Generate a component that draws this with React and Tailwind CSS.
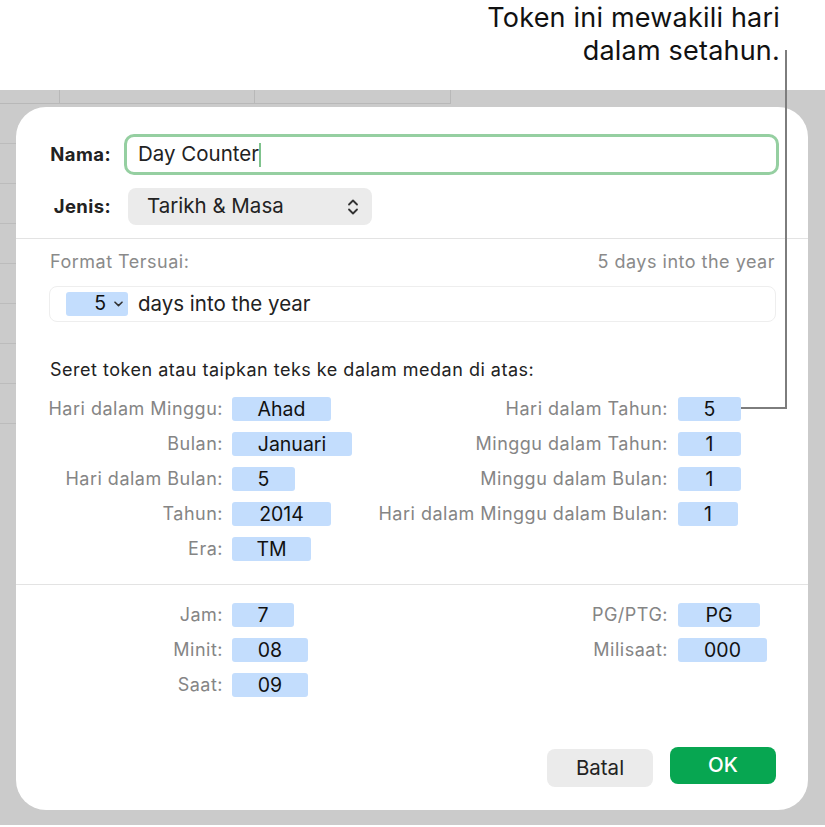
import React from "react";

const font = { fontFamily: "Inter, 'Noto Sans', sans-serif" };

function Token({ w, children }) {
  return (
    <div className={`h-6 rounded-[3px] bg-[#c3ddfd] text-[#111] text-[19.5px] leading-6 text-center ${w}`}>
      {children}
    </div>
  );
}

function Row({ lLabel, lTok, lW, rLabel, rTok, rW }) {
  return (
    <div className="flex h-[35px] items-center pl-[18px]">
      <div className="w-[198px] text-right text-[18px] tracking-[0.5px] text-[#858585] pr-[9px] whitespace-nowrap">{lLabel}</div>
      <div className="w-[140px]">{lTok && <Token w={lW}>{lTok}</Token>}</div>
      <div className="w-[306px] text-right text-[18px] tracking-[0.5px] text-[#858585] pr-[10px] whitespace-nowrap">{rLabel}</div>
      <div>{rTok && <Token w={rW}>{rTok}</Token>}</div>
    </div>
  );
}

export default function App() {
  return (
    <div style={font} className="relative w-[825px] h-[827px] bg-white overflow-hidden flex flex-col">
      {/* callout text */}
      <div className="h-[90px] flex justify-end pr-[45px] pt-[1px]">
        <div className="text-right text-[27px] leading-[33px] text-[#111] tracking-[0.2px]">
          Token ini mewakili hari
          <br />
          dalam setahun.
        </div>
      </div>

      {/* spreadsheet background */}
      <div className="h-[735px] bg-[#cbcbcb] flex flex-col">
        <div className="h-[14px] flex">
          <div className="w-[60px] border-r border-b border-[#b8b8b8]" />
          <div className="w-[195px] border-r border-b border-[#b8b8b8]" />
          <div className="w-[196px] border-r border-b border-[#b8b8b8]" />
        </div>
        <div className="flex flex-1">
          <div className="w-4 flex flex-col">
            {Array.from({ length: 8 }).map((_, i) => (
              <div key={i} className="h-10 border-b border-[#bcbcbc]" />
            ))}
          </div>

          {/* dialog */}
          <div className="mt-[3px] w-[792px] h-[703px] bg-white rounded-[30px] flex flex-col">
            {/* Nama */}
            <div className="mt-[27px] flex items-center px-[18px]">
              <div className="w-[77px] text-right text-[18.5px] tracking-[0.4px] font-bold text-[#222]">Nama:</div>
              <div className="ml-[13px] w-[655px] h-[41px] rounded-[10px] border-[3px] border-[#95cfa1] flex items-center pl-[11px] text-[20.5px] text-[#222]">
                Day Counter
                <span className="inline-block w-[2px] h-[24px] bg-[#7fc38d]" />
              </div>
            </div>
            {/* Jenis */}
            <div className="mt-[13px] flex items-center px-[18px]">
              <div className="w-[77px] text-right text-[18.5px] tracking-[0.4px] font-bold text-[#222]">Jenis:</div>
              <div className="ml-[17px] w-[244px] h-[37px] rounded-[8px] bg-[#ebebeb] flex items-center justify-between pl-[19px] pr-[13px] text-[20.5px] text-[#222]">
                Tarikh &amp; Masa
                <svg width="12" height="18" viewBox="0 0 12 18" fill="none" stroke="#333" strokeWidth="1.8" strokeLinecap="round" strokeLinejoin="round">
                  <path d="M2 6.5 L6 2.5 L10 6.5" />
                  <path d="M2 11.5 L6 15.5 L10 11.5" />
                </svg>
              </div>
            </div>
            <div className="mt-[13px] h-px bg-[#e3e3e3]" />

            {/* Format */}
            <div className="mt-[12px] flex justify-between pl-[34px] pr-[33px] text-[18px] tracking-[0.5px] leading-[22px] text-[#8a8a8a]">
              <span>Format Tersuai:</span>
              <span>5 days into the year</span>
            </div>
            <div className="mt-[13px] ml-[33px] mr-[32px] h-[36px] rounded-[8px] border border-[#eeeeee] flex items-center pl-[16px] text-[20.5px] text-[#222]">
              <div className="w-[62px] h-6 rounded-[3px] bg-[#c3ddfd] flex items-center justify-end pr-[5px] gap-[8px] text-[19.5px] text-[#111]">
                5
                <svg width="9" height="6" viewBox="0 0 9 6" fill="none" stroke="#333" strokeWidth="1.6" strokeLinecap="round" strokeLinejoin="round">
                  <path d="M1 1.2 L4.5 4.6 L8 1.2" />
                </svg>
              </div>
              <span className="ml-[10px]">days into the year</span>
            </div>

            <div className="mt-[37px] pl-[34px] text-[18px] tracking-[0.5px] leading-[22px] text-[#222]">
              Seret token atau taipkan teks ke dalam medan di atas:
            </div>

            <div className="mt-[10px] flex flex-col">
              <Row lLabel="Hari dalam Minggu:" lTok="Ahad" lW="w-[99px]" rLabel="Hari dalam Tahun:" rTok="5" rW="w-[63px]" />
              <Row lLabel="Bulan:" lTok="Januari" lW="w-[120px]" rLabel="Minggu dalam Tahun:" rTok="1" rW="w-[63px]" />
              <Row lLabel="Hari dalam Bulan:" lTok="5" lW="w-[63px]" rLabel="Minggu dalam Bulan:" rTok="1" rW="w-[63px]" />
              <Row lLabel="Tahun:" lTok="2014" lW="w-[99px]" rLabel="Hari dalam Minggu dalam Bulan:" rTok="1" rW="w-[60px]" />
              <Row lLabel="Era:" lTok="TM" lW="w-[79px]" />
            </div>

            <div className="mt-[18px] h-px bg-[#e3e3e3]" />

            <div className="mt-[12px] flex flex-col">
              <Row lLabel="Jam:" lTok="7" lW="w-[62px]" rLabel="PG/PTG:" rTok="PG" rW="w-[82px]" />
              <Row lLabel="Minit:" lTok="08" lW="w-[76px]" rLabel="Milisaat:" rTok="000" rW="w-[89px]" />
              <Row lLabel="Saat:" lTok="09" lW="w-[76px]" />
            </div>

            <div className="mt-auto mb-[23px] flex justify-end items-start gap-[17px] pr-[32px]">
              <button className="mt-[2px] w-[106px] h-[38px] rounded-[8px] bg-[#ebebeb] text-[20.5px] text-[#222]">Batal</button>
              <button className="w-[106px] h-[37px] rounded-[8px] bg-[#07a651] text-[20.5px] font-medium text-white">OK</button>
            </div>
          </div>
        </div>
      </div>
      <div className="h-[2px] bg-white" />

      {/* callout line */}
      <div className="absolute left-[785px] top-[50px] w-[2px] h-[359px] bg-[#7d7d7d]" />
      <div className="absolute left-[741px] top-[407px] w-[46px] h-[2px] bg-[#7d7d7d]" />
    </div>
  );
}
